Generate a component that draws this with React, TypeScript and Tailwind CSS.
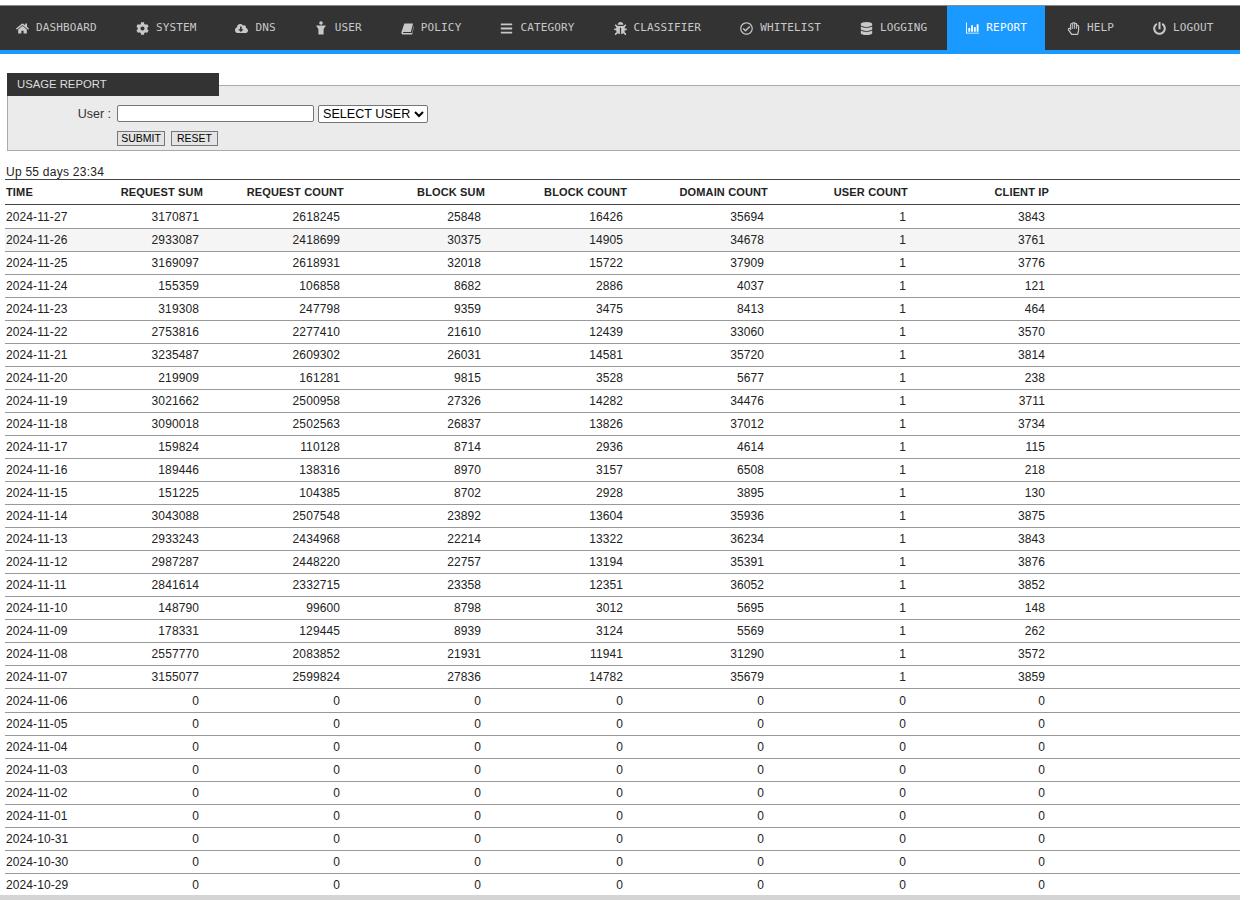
import React from 'react';
import {
  FaHome, FaCog, FaCloudDownloadAlt, FaBars, FaBug,
  FaRegCheckCircle, FaDatabase, FaRegHandPaper, FaPowerOff,
} from 'react-icons/fa';

type IconProps = { size?: number };

// the icon set in the picture is older than the packaged one, these three differ too much
const MaleIcon: React.FC<IconProps> = () => (
  <svg width="12" height="14" viewBox="0 0 12 14" fill="currentColor">
    <circle cx="6" cy="2" r="1.8" />
    <path d="M1 4.5h10L8.6 8v5.5H3.4V8Z" />
  </svg>
);

const SlantBookIcon: React.FC<IconProps> = () => (
  <svg width="14" height="13" viewBox="0 0 14 13" fill="currentColor">
    <path d="M3.6 1H13l-2.4 9.4H2.7c-.9 0-.9 1 0 1h9.2l1.7-7.6.4.4-2 8.8H2C.5 12.6.2 11.4.6 10Z" />
  </svg>
);

const BarsChartIcon: React.FC<IconProps> = () => (
  <svg width="14" height="12" viewBox="0 0 14 12" fill="currentColor">
    <path d="M0 0h1v11h13v1H0Z" />
    <rect x="2.5" y="6" width="2" height="4" />
    <rect x="5.5" y="3" width="2" height="7" />
    <rect x="8.5" y="5" width="2" height="5" />
    <rect x="11.5" y="2" width="2" height="8" />
  </svg>
);

const NAV_ITEMS = [
  { label: 'DASHBOARD', icon: FaHome },
  { label: 'SYSTEM', icon: FaCog },
  { label: 'DNS', icon: FaCloudDownloadAlt },
  { label: 'USER', icon: MaleIcon },
  { label: 'POLICY', icon: SlantBookIcon },
  { label: 'CATEGORY', icon: FaBars },
  { label: 'CLASSIFIER', icon: FaBug },
  { label: 'WHITELIST', icon: FaRegCheckCircle },
  { label: 'LOGGING', icon: FaDatabase },
  { label: 'REPORT', icon: BarsChartIcon, active: true },
  { label: 'HELP', icon: FaRegHandPaper },
  { label: 'LOGOUT', icon: FaPowerOff },
];

const HEADERS = ['TIME', 'REQUEST SUM', 'REQUEST COUNT', 'BLOCK SUM', 'BLOCK COUNT', 'DOMAIN COUNT', 'USER COUNT', 'CLIENT IP'];

const ROWS: (string | number)[][] = [
  ['2024-11-27', 3170871, 2618245, 25848, 16426, 35694, 1, 3843],
  ['2024-11-26', 2933087, 2418699, 30375, 14905, 34678, 1, 3761],
  ['2024-11-25', 3169097, 2618931, 32018, 15722, 37909, 1, 3776],
  ['2024-11-24', 155359, 106858, 8682, 2886, 4037, 1, 121],
  ['2024-11-23', 319308, 247798, 9359, 3475, 8413, 1, 464],
  ['2024-11-22', 2753816, 2277410, 21610, 12439, 33060, 1, 3570],
  ['2024-11-21', 3235487, 2609302, 26031, 14581, 35720, 1, 3814],
  ['2024-11-20', 219909, 161281, 9815, 3528, 5677, 1, 238],
  ['2024-11-19', 3021662, 2500958, 27326, 14282, 34476, 1, 3711],
  ['2024-11-18', 3090018, 2502563, 26837, 13826, 37012, 1, 3734],
  ['2024-11-17', 159824, 110128, 8714, 2936, 4614, 1, 115],
  ['2024-11-16', 189446, 138316, 8970, 3157, 6508, 1, 218],
  ['2024-11-15', 151225, 104385, 8702, 2928, 3895, 1, 130],
  ['2024-11-14', 3043088, 2507548, 23892, 13604, 35936, 1, 3875],
  ['2024-11-13', 2933243, 2434968, 22214, 13322, 36234, 1, 3843],
  ['2024-11-12', 2987287, 2448220, 22757, 13194, 35391, 1, 3876],
  ['2024-11-11', 2841614, 2332715, 23358, 12351, 36052, 1, 3852],
  ['2024-11-10', 148790, 99600, 8798, 3012, 5695, 1, 148],
  ['2024-11-09', 178331, 129445, 8939, 3124, 5569, 1, 262],
  ['2024-11-08', 2557770, 2083852, 21931, 11941, 31290, 1, 3572],
  ['2024-11-07', 3155077, 2599824, 27836, 14782, 35679, 1, 3859],
  ...['06', '05', '04', '03', '02', '01'].map((d) => [`2024-11-${d}`, 0, 0, 0, 0, 0, 0, 0]),
  ...['31', '30', '29'].map((d) => [`2024-10-${d}`, 0, 0, 0, 0, 0, 0, 0]),
];

const COL_WIDTHS = ['w-[57px]', 'w-[141px]', 'w-[141px]', 'w-[141px]', 'w-[142px]', 'w-[141px]', 'w-[140px]', 'w-[141px]'];

const rowHeight = (r: number, last: boolean) => {
  if (last) return 'h-[21px]';
  if (r === 0 || r === 21) return 'h-[24px] border-b border-b-[#999]';
  return 'h-[23px] border-b border-b-[#999]';
};

const App: React.FC = () => {
  return (
    <div className="min-h-[900px] bg-white font-['Liberation_Sans',Arial,sans-serif] text-[12px] text-[#222]">
      {/* top nav */}
      <nav className="mt-[5px] flex h-[49px] gap-[2px] border-t border-b-[4px] border-t-[#888] border-b-[#1a9aff] bg-[#333]">
        {NAV_ITEMS.map((item, i) => (
          <a
            key={item.label}
            className={`flex h-full items-center gap-[7px] whitespace-nowrap font-['DejaVu_Sans_Mono',monospace] text-[11px] tracking-[0.14px] ${
              item.active ? 'bg-[#1a9aff] pl-[19.5px] pr-[18.5px] text-white' : 'pr-[17.5px] text-[#c8c8c8]'
            } ${i === 0 ? 'pl-[16px]' : item.active ? '' : 'pl-[19.5px]'}`}
          >
            <span className="flex w-[13px] justify-center">
              <item.icon size={13} />
            </span>
            {item.label}
          </a>
        ))}
      </nav>

      {/* usage report form */}
      <div className="ml-[7px] mt-[19px]">
        <div className="relative z-10 h-[23px] w-[212px] bg-[#333] pl-[10px] text-[11.3px] leading-[23px] text-[#ddd]">USAGE REPORT</div>
        <div className="-mt-[11px] h-[66px] border border-r-0 border-[#aaa] bg-[#ebebeb] pt-[18px]">
          <div className="flex items-center">
            <label className="w-[103px] pt-px text-right text-[12.5px] text-[#333]">User :</label>
            <input className="ml-[6px] h-[17px] w-[197px] rounded-[2px] border border-[#767676] bg-white" />
            <select className="ml-[4px] h-[18px] w-[110px] rounded-[2px] border border-[#767676] bg-white text-[12.6px] leading-none text-black">
              <option>SELECT USER</option>
            </select>
          </div>
          <div className="ml-[109px] mt-[7px] flex gap-[6px]">
            <button className="h-[15px] w-[48px] border border-[#777] bg-[#e4e4e4] text-[10.5px] leading-none text-black">SUBMIT</button>
            <button className="h-[15px] w-[47px] border border-[#777] bg-[#e4e4e4] text-[10.5px] leading-none text-black">RESET</button>
          </div>
        </div>
      </div>

      <div className="ml-[6px] mt-[14px] h-[14px] text-[12px] leading-[15px] tracking-[0.25px]">Up 55 days 23:34</div>

      {/* stats table */}
      <table className="ml-[5px] w-[1235px] table-fixed border-collapse">
        <colgroup>
          {COL_WIDTHS.map((w, i) => (
            <col key={i} className={w} />
          ))}
          <col />
        </colgroup>
        <thead>
          <tr className="h-[25px] border-y border-y-[#444]">
            {HEADERS.map((h, i) => (
              <th key={h} className={`whitespace-nowrap text-[11px] font-bold tracking-[0.15px] text-[#222] ${i === 0 ? 'pl-px text-left' : 'text-right'}`}>
                {h}
              </th>
            ))}
            <th />
          </tr>
        </thead>
        <tbody>
          {ROWS.map((row, r) => {
            const last = r === ROWS.length - 1;
            return (
              <tr key={String(row[0])} className={`${rowHeight(r, last)} ${r === 1 ? 'bg-[#f5f5f5]' : ''}`}>
                {row.map((cell, i) => (
                  <td
                    key={i}
                    className={`whitespace-nowrap tracking-[0.1px] ${last || r === 0 ? 'pt-px' : ''} ${
                      i === 0 ? 'pl-px text-left' : i === 6 ? 'pr-[2px] text-right' : 'pr-[4px] text-right'
                    }`}
                  >
                    {cell}
                  </td>
                ))}
                <td />
              </tr>
            );
          })}
        </tbody>
      </table>
      <div className="h-[6px] bg-[#d4d4d4]" />
    </div>
  );
};

export default App;
